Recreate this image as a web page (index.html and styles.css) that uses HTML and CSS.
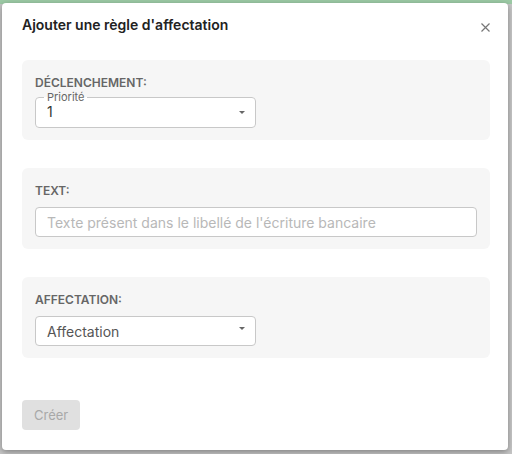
FILE: index.html
```html
<!DOCTYPE html>
<html lang="fr">
	<head>
		<meta charset="utf-8" />
		<meta name="viewport" content="width=device-width, initial-scale=1.0" />
		<title>Ajouter une règle d'affectation</title>
		<link rel="stylesheet" href="styles.css">
	</head>
	<body>
		<div class="modal">
			<div class="modal-header">
				<h2>Ajouter une règle d'affectation</h2>
				<button class="close-btn" aria-label="Fermer">
					<svg width="9" height="9" viewBox="0 0 9 9">
						<path d="M0.5 0.5 L8.5 8.5 M8.5 0.5 L0.5 8.5" stroke="#777" stroke-width="1.2" fill="none" />
					</svg>
				</button>
			</div>

			<div class="modal-body">
				<div class="section">
					<div class="section-title">DÉCLENCHEMENT:</div>
					<fieldset class="outlined-select">
						<legend>Priorité</legend>
						<div class="select-value">
							<span>1</span>
							<svg class="caret" width="6" height="3" viewBox="0 0 6 3"><path d="M0 0 H6 L3 3 Z" fill="#666" /></svg>
						</div>
					</fieldset>
				</div>

				<div class="section">
					<div class="section-title">TEXT:</div>
					<input class="text-input" type="text" placeholder="Texte présent dans le libellé de l'écriture bancaire" />
				</div>

				<div class="section">
					<div class="section-title">AFFECTATION:</div>
					<div class="plain-select">
						<span>Affectation</span>
						<svg class="caret" width="6" height="3" viewBox="0 0 6 3"><path d="M0 0 H6 L3 3 Z" fill="#666" /></svg>
					</div>
				</div>
			</div>

			<div class="modal-footer">
				<button class="create-btn" disabled>Créer</button>
			</div>
		</div>
	</body>
</html>
```

FILE: styles.css
```css
html,
body {
	height: 100%;
}

body {
	margin: 0;
	overflow: hidden;
	font-family: Inter, 'Noto Sans', sans-serif;
	background: linear-gradient(#9ccaa5 0 4px, #c6c6c6 4px);
}

/* Dialog */
.modal {
	box-sizing: border-box;
	width: 506px;
	height: 447px;
	margin: 3px 0 0 2px;
	padding: 12px 18px 20px 20px;
	background: white;
	border-radius: 4px;
	box-shadow: 0 2px 6px rgba(0, 0, 0, 0.35);
	display: flex;
	flex-direction: column;
}

.modal-header {
	display: flex;
	justify-content: space-between;
	align-items: center;
	margin-bottom: 25px;
}

.modal-header h2 {
	margin: 0;
	font-size: 14px;
	line-height: 20px;
	font-weight: 600;
	color: #222;
}

.close-btn {
	border: none;
	background: none;
	padding: 0;
	margin-top: 4px;
	display: flex;
	cursor: pointer;
}

.modal-body {
	display: flex;
	flex-direction: column;
	gap: 28px;
}

/* Gray blocks */
.section {
	background: #f6f6f6;
	border-radius: 6px;
	padding: 15px 13px 12px;
}

.section-title {
	font-size: 12px;
	line-height: 15px;
	font-weight: 600;
	color: #666;
}

/* Select with floating label */
.outlined-select {
	box-sizing: border-box;
	width: 221px;
	margin: 2px 0 0;
	padding: 0 8px 8px;
	border: 1px solid #c8c8c8;
	border-radius: 4px;
	background: white;
}

.outlined-select legend {
	padding: 0 3px;
	font-size: 11px;
	line-height: 10px;
	color: #666;
}

.select-value {
	display: flex;
	justify-content: space-between;
	align-items: center;
	margin-top: 3px;
	padding-left: 3px;
	font-size: 14px;
	line-height: 14px;
	color: #333;
}

.select-value .caret {
	margin-right: 2px;
}

.plain-select {
	box-sizing: border-box;
	width: 221px;
	height: 30px;
	margin-top: 9px;
	padding: 0 10px 0 11px;
	border: 1px solid #c8c8c8;
	border-radius: 4px;
	background: white;
	display: flex;
	justify-content: space-between;
	align-items: center;
	font-size: 14px;
	color: #555;
}

.plain-select .caret {
	align-self: flex-start;
	margin-top: 10px;
}

.text-input {
	display: block;
	box-sizing: border-box;
	width: 100%;
	height: 30px;
	margin-top: 9px;
	padding: 0 11px;
	border: 1px solid #c8c8c8;
	border-radius: 4px;
	background: white;
	font-family: inherit;
	font-size: 14px;
	color: #333;
}

.text-input::placeholder {
	color: #b8b8b8;
}

.text-input:focus {
	outline: none;
}

/* Footer */
.modal-footer {
	margin-top: auto;
}

.create-btn {
	height: 30px;
	padding: 0 12px;
	border: none;
	border-radius: 4px;
	background: #e0e0e0;
	color: #a8a8a8;
	font-family: inherit;
	font-size: 13px;
}
```
